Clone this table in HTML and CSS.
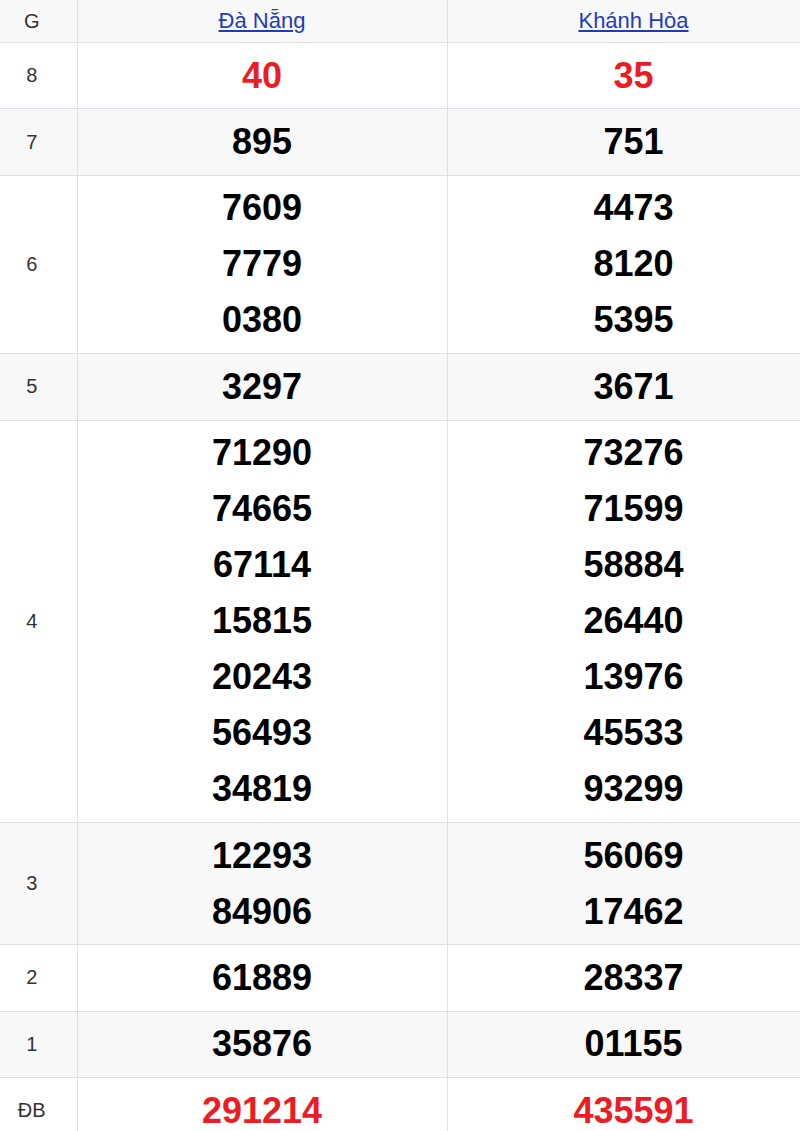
FILE: index.html
```html
<!DOCTYPE html>
<html lang="vi">
<head>
<meta charset="utf-8">
<link rel="stylesheet" href="styles.css">
</head>
<body>
<div class="wrap">
<table class="kq">
  <colgroup><col class="c-g"><col class="c-p"><col class="c-p2"></colgroup>
  <tr class="alt head"><td class="g">G</td><td><a href="#">Đà Nẵng</a></td><td><a href="#">Khánh Hòa</a></td></tr>
  <tr><td class="g">8</td><td><div class="n red">40</div></td><td><div class="n red">35</div></td></tr>
  <tr class="alt"><td class="g">7</td><td><div class="n">895</div></td><td><div class="n">751</div></td></tr>
  <tr><td class="g">6</td><td><div class="n">7609</div><div class="n">7779</div><div class="n">0380</div></td><td><div class="n">4473</div><div class="n">8120</div><div class="n">5395</div></td></tr>
  <tr class="alt"><td class="g">5</td><td><div class="n">3297</div></td><td><div class="n">3671</div></td></tr>
  <tr><td class="g">4</td><td><div class="n">71290</div><div class="n">74665</div><div class="n">67114</div><div class="n">15815</div><div class="n">20243</div><div class="n">56493</div><div class="n">34819</div></td><td><div class="n">73276</div><div class="n">71599</div><div class="n">58884</div><div class="n">26440</div><div class="n">13976</div><div class="n">45533</div><div class="n">93299</div></td></tr>
  <tr class="alt"><td class="g">3</td><td><div class="n">12293</div><div class="n">84906</div></td><td><div class="n">56069</div><div class="n">17462</div></td></tr>
  <tr><td class="g">2</td><td><div class="n">61889</div></td><td><div class="n">28337</div></td></tr>
  <tr class="alt"><td class="g">1</td><td><div class="n">35876</div></td><td><div class="n">01155</div></td></tr>
  <tr><td class="g">ĐB</td><td><div class="n red">291214</div></td><td><div class="n red">435591</div></td></tr>
</table>
</div>
</body>
</html>
```
FILE: styles.css
```css
html, body { margin: 0; padding: 0; background: #fff; }
body { font-family: "Liberation Sans", Arial, sans-serif; color: #000; }
.wrap { width: 800px; overflow: hidden; }
.kq { border-collapse: collapse; width: 820px; table-layout: fixed; }
.c-g { width: 77px; }
.c-p { width: 370px; }
.c-p2 { width: 373px; }
.kq td { border: 1px solid #dfe1e8; text-align: center; vertical-align: middle; padding: 4.7px 0; }
.kq tr:first-child td { border-top: none; }
.kq td:first-child { border-left: none; }
.alt td { background: #f8f8f8; }
.head td { height: 32px; padding: 5px 0; font-size: 22px; line-height: 32px; }
.head td a { color: #1f3cb8; text-decoration: underline; }
.kq td.g { font-size: 20px; color: #333; padding-right: 13px; }
.n { font-size: 36px; font-weight: bold; line-height: 56px; }
.red { color: #ec1c24; }
```
